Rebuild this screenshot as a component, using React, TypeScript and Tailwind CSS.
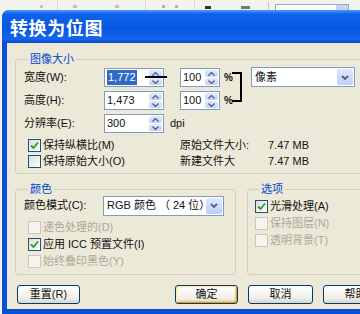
import React from "react";

function Arrow({ dir }: { dir: "up" | "down" }) {
  return (
    <svg width="7" height="4" viewBox="0 0 7 4">
      {dir === "up" ? (
        <path d="M0.5 3.5 L3.5 0.5 L6.5 3.5" fill="none" stroke="#4d6185" strokeWidth="1.3" />
      ) : (
        <path d="M0.5 0.5 L3.5 3.5 L6.5 0.5" fill="none" stroke="#4d6185" strokeWidth="1.3" />
      )}
    </svg>
  );
}

function Spin({ drag }: { drag?: boolean }) {
  return (
    <div className="relative w-[15px] h-full flex flex-col gap-[1px] p-[1px]">
      <div className="flex-1 rounded-[2px] bg-[linear-gradient(#e2eafe,#c2d2fa)] flex items-center justify-center">
        <Arrow dir="up" />
      </div>
      <div className="flex-1 rounded-[2px] bg-[linear-gradient(#e2eafe,#c2d2fa)] flex items-center justify-center">
        <Arrow dir="down" />
      </div>
      {drag && <div className="absolute left-[-3px] right-[-4px] top-[7px] h-[2px] bg-black" />}
    </div>
  );
}

function NumInput({ w, value, sel, drag }: { w: string; value: string; sel?: boolean; drag?: boolean }) {
  return (
    <div className={`${w} h-[19px] border border-[#7f9db9] bg-white flex items-stretch`}>
      <div className="flex-1 flex items-center pl-[2px]">
        <span className={sel ? "bg-[#316ac5] text-white px-[1px] leading-[15px]" : "leading-[15px]"}>{value}</span>
      </div>
      <Spin drag={drag} />
    </div>
  );
}

function Select({ w, value }: { w: string; value: string }) {
  return (
    <div className={`${w} h-[20px] border border-[#7f9db9] bg-white flex items-stretch`}>
      <div className="flex-1 flex items-center pl-[3px] whitespace-nowrap overflow-hidden">{value}</div>
      <div className="w-[16px] m-[1px] rounded-[2px] bg-[linear-gradient(#dfe8fe,#bccffa)] flex items-center justify-center">
        <svg width="8" height="5" viewBox="0 0 8 5">
          <path d="M1 1 L4 4 L7 1" fill="none" stroke="#4d6185" strokeWidth="1.8" />
        </svg>
      </div>
    </div>
  );
}

function Check({ label, checked, disabled }: { label: string; checked?: boolean; disabled?: boolean }) {
  return (
    <div className="flex items-center gap-[2px]">
      <div
        className={
          disabled
            ? "w-[13px] h-[13px] border border-[#cac8bb] bg-[#f5f4ee]"
            : "w-[13px] h-[13px] border border-[#1c5180] bg-[linear-gradient(135deg,#dcdcd7,#ffffff)] flex items-center justify-center"
        }
      >
        {checked && (
          <svg width="9" height="9" viewBox="0 0 9 9">
            <path d="M1 4.5 L3.5 7 L8 1.5" fill="none" stroke="#21a121" strokeWidth="1.8" />
          </svg>
        )}
      </div>
      <span className={disabled ? "text-[#aca899] whitespace-nowrap" : "whitespace-nowrap"}>{label}</span>
    </div>
  );
}

function Btn({ label, w, def }: { label: string; w: string; def?: boolean }) {
  return (
    <div
      className={`${w} h-[19px] rounded-[3px] border border-[#003c74] bg-[linear-gradient(#ffffff,#f0efe9_70%,#d8d5c8)] flex items-center justify-center ${
        def ? "shadow-[inset_1px_1px_0_#fce7b5,inset_-1px_-1px_0_#e5a01a,inset_2px_2px_0_#fdf3d5,inset_-2px_-2px_0_#f8c86a]" : ""
      }`}
    >
      {label}
    </div>
  );
}

export default function App() {
  return (
    <div className="w-[360px] h-[314px] overflow-hidden bg-[#f4f2ec] flex flex-col text-[11px] text-[#111] font-['Liberation_Sans','Noto_Sans_CJK_SC',sans-serif]">
      {/* background toolbar strip */}
      <div className="h-[10px] flex items-start shrink-0">
        <div className="ml-[40px] mt-[5px] w-[3px] h-[3px] bg-[#c8c4b8]" />
        <div className="ml-[14px] w-[1px] h-[10px] bg-[#dedad0]" />
        <div className="ml-[15px] mt-[5px] w-[4px] h-[3px] bg-[#c8c4b8]" />
        <div className="ml-[38px] mt-[5px] w-[4px] h-[3px] bg-[#c8c4b8]" />
        <div className="ml-[26px] w-[1px] h-[10px] bg-[#dedad0]" />
        <div className="ml-[16px] mt-[5px] w-[3px] h-[3px] bg-[#b8b4a8]" />
        <div className="ml-[10px] mt-[5px] w-[3px] h-[3px] bg-[#b8b4a8]" />
        <div className="ml-[16px] w-[1px] h-[10px] bg-[#dedad0]" />
        <div className="ml-[10px] mt-[6px] w-[6px] h-[3px] bg-[#333]" />
        <div className="ml-[30px] mt-[6px] w-[9px] h-[3px] bg-[#777]" />
        <div className="ml-[18px] mt-[2px] w-[1px] h-[8px] bg-[#c8c4b8]" />
        <div className="ml-[6px] mt-[4px] w-[74px] h-[6px] border-t border-x border-[#9aa7b8] bg-white flex justify-end">
          <div className="w-[12px] h-full bg-[#c6d3f0]" />
        </div>
      </div>

      {/* dialog */}
      <div className="ml-[2px] w-[420px] flex-1 flex flex-col rounded-t-[7px] overflow-hidden bg-[#0a50d6]">
        <div className="h-[33px] shrink-0 flex items-center pl-[8px] bg-[linear-gradient(to_bottom,#4a9bff_0%,#0e63ea_12%,#0656e0_55%,#1566ee_88%,#0a46c4_100%)]">
          <span className="text-white font-bold text-[18px] tracking-[0.6px] leading-none font-['Noto_Sans_CJK_SC',sans-serif]">
            转换为位图
          </span>
        </div>
        <div className="flex-1 ml-[5px] mb-[5px] bg-[#ece9d8] flex flex-col pl-[8px] pt-[9px]">
          {/* 图像大小 */}
          <fieldset className="w-[350px] border border-[#d0d0bf] rounded-[3px] pl-[8px] pt-[2px] pb-[4px]">
            <legend className="ml-[4px] px-[2px] text-[#0046d5] leading-[14px]">图像大小</legend>
            <div className="flex items-start">
              <div className="flex flex-col gap-[4px]">
                <div className="flex items-center h-[19px]">
                  <span className="w-[80px]">宽度(W):</span>
                  <NumInput w="w-[60px]" value="1,772" sel drag />
                  <div className="ml-[16px]">
                    <NumInput w="w-[40px]" value="100" />
                  </div>
                  <span className="ml-[4px] w-[7px] font-bold text-[10px]">%</span>
                </div>
                <div className="flex items-center h-[19px]">
                  <span className="w-[80px]">高度(H):</span>
                  <NumInput w="w-[60px]" value="1,473" />
                  <div className="ml-[16px]">
                    <NumInput w="w-[40px]" value="100" />
                  </div>
                  <span className="ml-[4px] w-[7px] font-bold text-[10px]">%</span>
                </div>
              </div>
              <div className="ml-[1px] mt-[4px] w-[10px] h-[30px] border-y-2 border-r-2 border-black" />
              <div className="ml-[9px] mt-[-1px]">
                <Select w="w-[104px]" value="像素" />
              </div>
            </div>
            <div className="flex items-center h-[19px] mt-[4px]">
              <span className="w-[80px]">分辨率(E):</span>
              <NumInput w="w-[60px]" value="300" />
              <span className="ml-[6px]">dpi</span>
            </div>
            <div className="mt-[4px] flex items-center h-[16px]">
              <div className="w-[156px] pl-[4px]">
                <Check label="保持纵横比(M)" checked />
              </div>
              <span className="w-[88px]">原始文件大小:</span>
              <span>7.47 MB</span>
            </div>
            <div className="flex items-center h-[16px]">
              <div className="w-[156px] pl-[4px]">
                <Check label="保持原始大小(O)" />
              </div>
              <span className="w-[88px]">新建文件大</span>
              <span>7.47 MB</span>
            </div>
          </fieldset>

          <div className="mt-[8px] flex items-stretch">
            <fieldset className="w-[221px] border border-[#d0d0bf] rounded-[3px] pl-[8px] pb-[4px]">
              <legend className="ml-[4px] px-[2px] text-[#0046d5] leading-[14px]">颜色</legend>
              <div className="flex items-center h-[19px]">
                <span className="w-[79px]">颜色模式(C):</span>
                <Select w="w-[121px]" value="RGB 颜色 （ 24 位）" />
              </div>
              <div className="mt-[4px] pl-[4px] flex flex-col">
                <div className="h-[17px] flex items-center">
                  <Check label="递色处理的(D)" disabled />
                </div>
                <div className="h-[17px] flex items-center">
                  <Check label="应用 ICC 预置文件(I)" checked />
                </div>
                <div className="h-[17px] flex items-center">
                  <Check label="始终叠印黑色(Y)" disabled />
                </div>
              </div>
            </fieldset>
            <fieldset className="ml-[11px] w-[150px] border border-[#d0d0bf] rounded-[3px] pl-[7px]">
              <legend className="ml-[4px] px-[2px] text-[#0046d5] leading-[14px]">选项</legend>
              <div className="mt-[2px] flex flex-col">
                <div className="h-[17px] flex items-center">
                  <Check label="光滑处理(A)" checked />
                </div>
                <div className="h-[17px] flex items-center">
                  <Check label="保持图层(N)" disabled />
                </div>
                <div className="h-[17px] flex items-center">
                  <Check label="透明背景(T)" disabled />
                </div>
              </div>
            </fieldset>
          </div>

          <div className="mt-[10px] flex items-center">
            <div className="ml-[2px]">
              <Btn label="重置(R)" w="w-[63px]" />
            </div>
            <div className="ml-[95px]">
              <Btn label="确定" w="w-[63px]" def />
            </div>
            <div className="ml-[10px]">
              <Btn label="取消" w="w-[65px]" />
            </div>
            <div className="ml-[10px]">
              <Btn label="帮助" w="w-[65px]" />
            </div>
          </div>
        </div>
      </div>
    </div>
  );
}
